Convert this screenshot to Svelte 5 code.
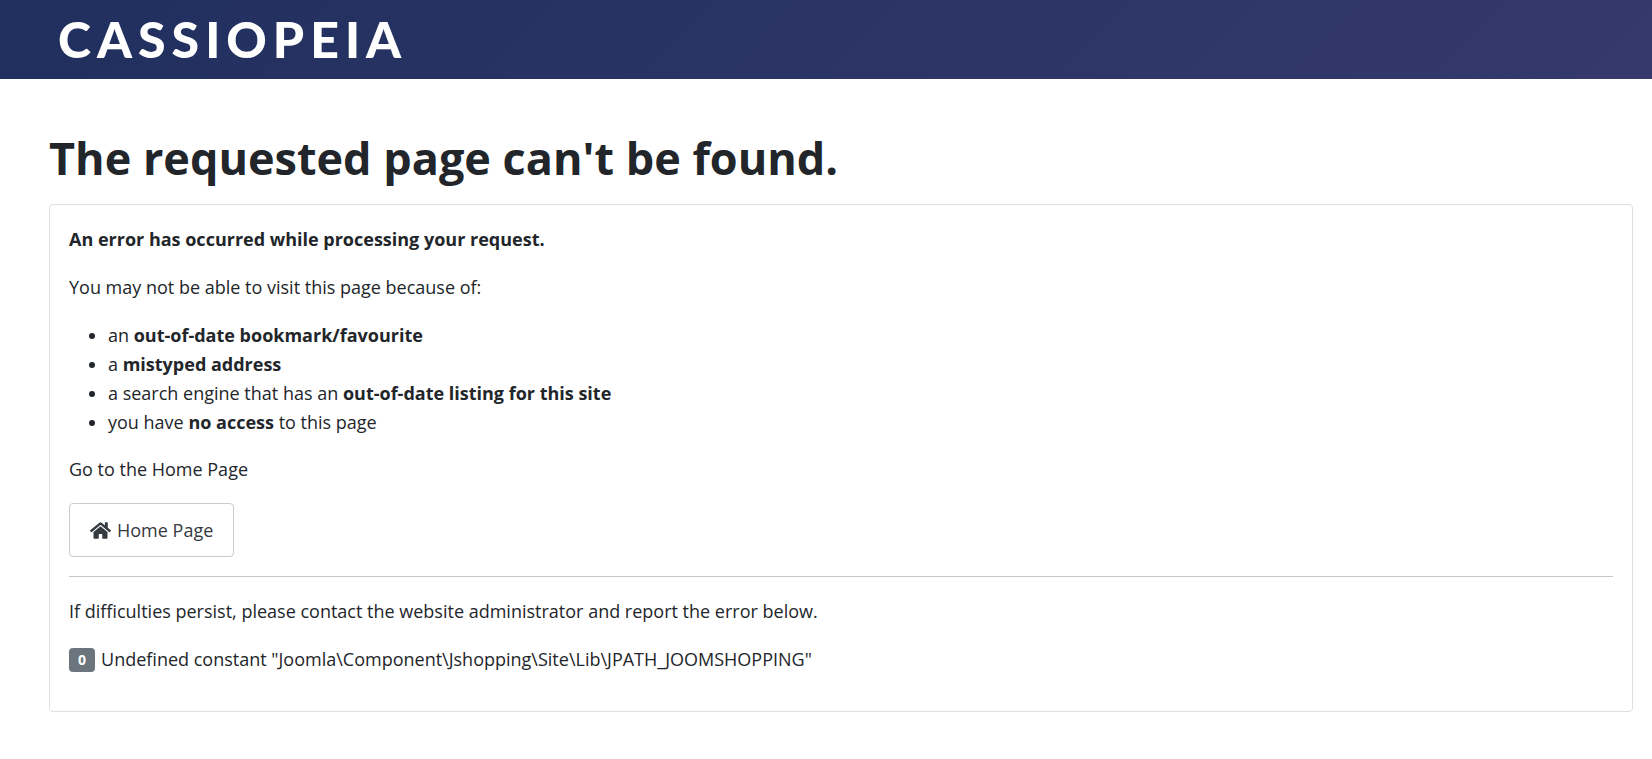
<script>
  const reasons = [
    { before: 'an ', strong: 'out-of-date bookmark/favourite', after: '' },
    { before: 'a ', strong: 'mistyped address', after: '' },
    { before: 'a search engine that has an ', strong: 'out-of-date listing for this site', after: '' },
    { before: 'you have ', strong: 'no access', after: ' to this page' }
  ];
  const message = 'Undefined constant "Joomla\\Component\\Jshopping\\Site\\Lib\\JPATH_JOOMSHOPPING"';
</script>

<header>
  <a class="brand" href="/">CASSIOPEIA</a>
</header>

<main>
  <h1>The requested page can't be found.</h1>
  <div class="card">
    <p><strong>An error has occurred while processing your request.</strong></p>
    <p>You may not be able to visit this page because of:</p>
    <ul>
      {#each reasons as r}
        <li>{r.before}<strong>{r.strong}</strong>{r.after}</li>
      {/each}
    </ul>
    <p>Go to the Home Page</p>
    <a class="button" href="/">
      <svg viewBox="0 0 576 512" aria-hidden="true">
        <path d="M280.37 148.26L96 300.11V464a16 16 0 0 0 16 16l112.06-.29a16 16 0 0 0 15.92-16V368a16 16 0 0 1 16-16h64a16 16 0 0 1 16 16v95.64a16 16 0 0 0 16 16.05L464 480a16 16 0 0 0 16-16V300L295.67 148.26a12.19 12.19 0 0 0-15.3 0zM571.6 251.47L488 182.56V44.05a12 12 0 0 0-12-12h-56a12 12 0 0 0-12 12v72.61L318.47 43a48 48 0 0 0-61 0L4.34 251.47a12 12 0 0 0-1.6 16.9l25.5 31A12 12 0 0 0 45.15 301l235.22-193.74a12.19 12.19 0 0 1 15.3 0L530.9 301a12 12 0 0 0 16.9-1.6l25.5-31a12 12 0 0 0-1.7-16.93z" />
      </svg>
      <span>Home Page</span>
    </a>
    <hr />
    <p>If difficulties persist, please contact the website administrator and report the error below.</p>
    <p class="error"><span class="badge">0</span>{message}</p>
  </div>
</main>

<style>
  :global(body) {
    background: #fff;
    color: #22262a;
    font-family: 'Open Sans', 'Noto Sans', sans-serif;
    font-size: 18px;
    font-weight: 400;
    line-height: 29px;
  }
  header {
    display: flex;
    padding: 9px 58px 10px;
    background: linear-gradient(135deg, #202f5e, #35396c);
  }
  .brand {
    color: #fff;
    font-family: Lato, sans-serif;
    font-size: 50px;
    font-weight: 900;
    letter-spacing: 6px;
    line-height: 60px;
    text-decoration: none;
  }
  main {
    padding: 48px 19px 48px 49px;
  }
  h1 {
    margin: 0 0 16px;
    font-size: 45px;
    font-weight: 700;
    line-height: 61px;
  }
  .card {
    padding: 20px 19px 18px;
    border: 1px solid #dfdfdf;
    border-radius: 4px;
  }
  p {
    margin: 0 0 19px;
  }
  ul {
    margin: 0 0 18px;
    padding-left: 39px;
  }
  strong {
    font-weight: 700;
  }
  .button {
    display: inline-flex;
    align-items: center;
    gap: 6px;
    height: 52px;
    padding: 0 20px;
    border: 1px solid #cdcdcd;
    border-radius: 4px;
    color: #343a40;
    text-decoration: none;
    vertical-align: top;
  }
  .button svg {
    width: 21px;
    height: 19px;
    fill: #343a40;
  }
  hr {
    height: 1px;
    margin: 19px 0 20px;
    border: 0;
    background: #c5c6c7;
  }
  .error {
    display: flex;
    align-items: center;
    gap: 6px;
  }
  .badge {
    padding: 0 9px;
    border-radius: 4px;
    background: #6c757d;
    color: #fff;
    font-size: 14px;
    font-weight: 700;
    line-height: 24px;
  }
</style>
